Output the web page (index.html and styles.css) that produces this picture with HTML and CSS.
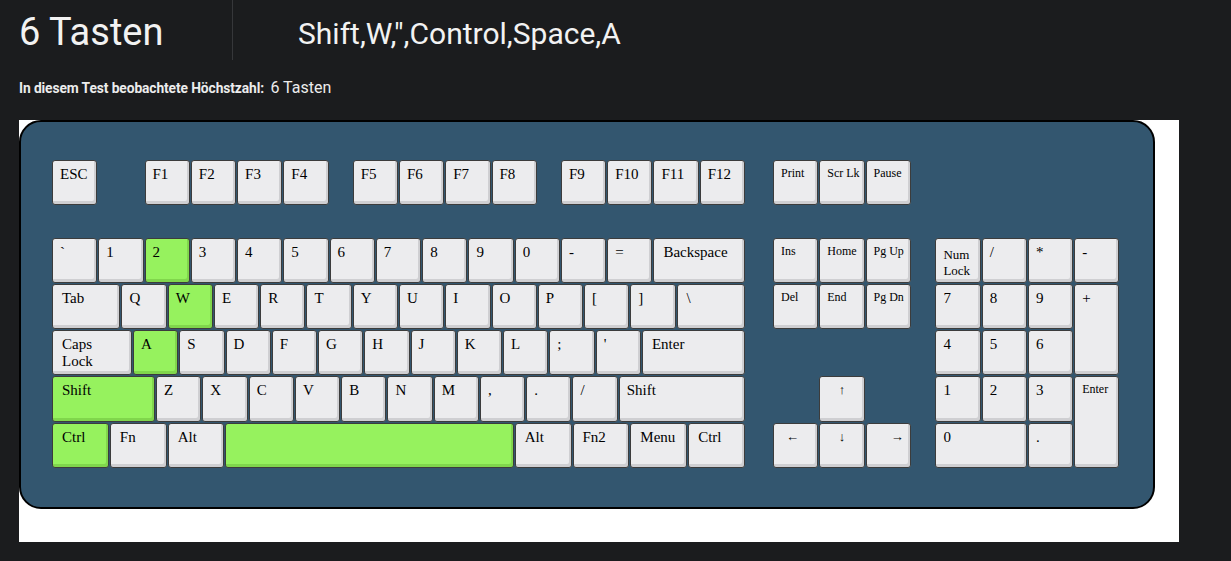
FILE: index.html
```html
<!DOCTYPE html>
<html lang="de">
<head>
    <meta charset="UTF-8">
    <meta name="viewport" content="width=device-width, initial-scale=1.0">
    <title>Tastatur Test</title>
    <link rel="stylesheet" href="styles.css">
</head>
<body>
    <div class="header">
        <div class="count">6 Tasten</div>
        <div class="pressed">Shift,W,",Control,Space,A</div>
    </div>
    <div class="stat"><b>In diesem Test beobachtete Höchstzahl:</b> <span>6 Tasten</span></div>

    <div class="board">
        <div class="keyboard">
            <!-- Haupttastenfeld -->
            <div class="section main">
                <div class="row frow">
                    <div class="key">ESC</div>
                    <div class="gap1"></div>
                    <div class="key">F1</div>
                    <div class="key">F2</div>
                    <div class="key">F3</div>
                    <div class="key">F4</div>
                    <div class="gap05"></div>
                    <div class="key">F5</div>
                    <div class="key">F6</div>
                    <div class="key">F7</div>
                    <div class="key">F8</div>
                    <div class="gap05"></div>
                    <div class="key">F9</div>
                    <div class="key">F10</div>
                    <div class="key">F11</div>
                    <div class="key">F12</div>
                </div>
                <div class="row">
                    <div class="key">`</div>
                    <div class="key">1</div>
                    <div class="key on">2</div>
                    <div class="key">3</div>
                    <div class="key">4</div>
                    <div class="key">5</div>
                    <div class="key">6</div>
                    <div class="key">7</div>
                    <div class="key">8</div>
                    <div class="key">9</div>
                    <div class="key">0</div>
                    <div class="key">-</div>
                    <div class="key">=</div>
                    <div class="key w2">Backspace</div>
                </div>
                <div class="row">
                    <div class="key w15">Tab</div>
                    <div class="key">Q</div>
                    <div class="key on">W</div>
                    <div class="key">E</div>
                    <div class="key">R</div>
                    <div class="key">T</div>
                    <div class="key">Y</div>
                    <div class="key">U</div>
                    <div class="key">I</div>
                    <div class="key">O</div>
                    <div class="key">P</div>
                    <div class="key">[</div>
                    <div class="key">]</div>
                    <div class="key w15">\</div>
                </div>
                <div class="row">
                    <div class="key w175">Caps<br>Lock</div>
                    <div class="key on">A</div>
                    <div class="key">S</div>
                    <div class="key">D</div>
                    <div class="key">F</div>
                    <div class="key">G</div>
                    <div class="key">H</div>
                    <div class="key">J</div>
                    <div class="key">K</div>
                    <div class="key">L</div>
                    <div class="key">;</div>
                    <div class="key">'</div>
                    <div class="key w225">Enter</div>
                </div>
                <div class="row">
                    <div class="key w225 on">Shift</div>
                    <div class="key">Z</div>
                    <div class="key">X</div>
                    <div class="key">C</div>
                    <div class="key">V</div>
                    <div class="key">B</div>
                    <div class="key">N</div>
                    <div class="key">M</div>
                    <div class="key">,</div>
                    <div class="key">.</div>
                    <div class="key">/</div>
                    <div class="key w275">Shift</div>
                </div>
                <div class="row">
                    <div class="key w125 on">Ctrl</div>
                    <div class="key w125">Fn</div>
                    <div class="key w125">Alt</div>
                    <div class="key w625 on"></div>
                    <div class="key w125">Alt</div>
                    <div class="key w125">Fn2</div>
                    <div class="key w125">Menu</div>
                    <div class="key w125">Ctrl</div>
                </div>
            </div>

            <!-- Steuerblock -->
            <div class="section nav">
                <div class="row frow">
                    <div class="key small">Print</div>
                    <div class="key small">Scr Lk</div>
                    <div class="key small">Pause</div>
                </div>
                <div class="row">
                    <div class="key small">Ins</div>
                    <div class="key small">Home</div>
                    <div class="key small">Pg Up</div>
                </div>
                <div class="row">
                    <div class="key small">Del</div>
                    <div class="key small">End</div>
                    <div class="key small">Pg Dn</div>
                </div>
                <div class="row"></div>
                <div class="row">
                    <div class="gap1"></div>
                    <div class="key arrow">↑</div>
                </div>
                <div class="row">
                    <div class="key arrow left">←</div>
                    <div class="key arrow">↓</div>
                    <div class="key arrow right">→</div>
                </div>
            </div>

            <!-- Ziffernblock -->
            <div class="section numpad">
                <div class="row frow"></div>
                <div class="pad">
                    <div class="key numlock">Num<br>Lock</div>
                    <div class="key">/</div>
                    <div class="key">*</div>
                    <div class="key">-</div>
                    <div class="key">7</div>
                    <div class="key">8</div>
                    <div class="key">9</div>
                    <div class="key tall">+</div>
                    <div class="key">4</div>
                    <div class="key">5</div>
                    <div class="key">6</div>
                    <div class="key">1</div>
                    <div class="key">2</div>
                    <div class="key">3</div>
                    <div class="key tall small">Enter</div>
                    <div class="key wide">0</div>
                    <div class="key">.</div>
                </div>
            </div>
        </div>
    </div>
</body>
</html>
```

FILE: styles.css
```css
:root{
    /* Breite einer Standardtaste inkl. Abstand */
    --u: 46.27px;
}
body{
    margin: 0;
    background-color: #1b1c1e;
    color: #f2f2f2;
    font-family: Roboto, "Noto Sans", sans-serif;
}
.header{
    display: flex;
    height: 60px;
}
.count{
    box-sizing: border-box;
    width: 233px;
    padding: 10px 0 0 19px;
    border-right: 1px solid #36373a;
    font-size: 38px;
    line-height: 44px;
}
.pressed{
    padding: 17px 0 0 65px;
    font-size: 30px;
    line-height: 34px;
}
.stat{
    margin: 18px 0 0 19px;
    height: 20px;
    line-height: 20px;
    font-size: 13.8px;
    color: #ececec;
}
.stat b{
    font-weight: 700;
    letter-spacing: -0.1px;
}
.stat span{
    margin-left: 3px;
    font-size: 16px;
}
.board{
    width: 1160px;
    height: 422px;
    margin: 22px 0 0 19px;
    background-color: #fff;
}
.keyboard{
    box-sizing: border-box;
    width: 1136px;
    height: 389px;
    padding: 37.5px 0 0 30.5px;
    border: 2px solid #000;
    border-radius: 22px;
    background-color: #33566f;
    display: flex;
    align-items: flex-start;
}
.section{
    display: flex;
    flex-direction: column;
}
.nav{
    margin-left: 27px;
}
.numpad{
    margin-left: 23.6px;
}
.row{
    display: flex;
    height: var(--u);
}
.frow{
    margin-bottom: 31.4px;
}
.gap1{
    flex: none;
    width: var(--u);
}
.gap05{
    flex: none;
    width: calc(var(--u) / 2);
}
.key{
    flex: none;
    box-sizing: border-box;
    width: calc(var(--u) - 1px);
    height: calc(var(--u) - 1px);
    margin: 0.5px;
    padding: 5px 0 0 7px;
    background-color: #ececee;
    border: 1px solid #3c3c3c;
    border-radius: 3px;
    box-shadow: inset -2px -3px 0 #cfcfd2;
    color: #000;
    font-family: "Liberation Serif", "Times New Roman", serif;
    font-size: 15px;
    line-height: 17px;
}
.key.on{
    background-color: #96f25e;
    box-shadow: inset -2px -3px 0 #80d64c;
}
.w125{ width: calc(var(--u) * 1.25 - 1px); padding-left: 9px; }
.w15{ width: calc(var(--u) * 1.5 - 1px); padding-left: 9px; }
.w175{ width: calc(var(--u) * 1.75 - 1px); padding-left: 9px; }
.w2{ width: calc(var(--u) * 2 - 1px); padding-left: 9px; }
.w225{ width: calc(var(--u) * 2.25 - 1px); padding-left: 9px; }
.w275{ width: calc(var(--u) * 2.75 - 1px); }
.w625{ width: calc(var(--u) * 6.25 - 1px); }

.small{
    font-size: 12px;
    line-height: 15px;
    padding-left: 7px;
}
.arrow{
    padding: 4px 0 0 0;
    text-align: center;
    font-size: 13px;
}
.arrow.left{
    text-align: left;
    padding-left: 12px;
}
.arrow.right{
    text-align: right;
    padding-right: 6px;
}
.pad{
    display: grid;
    grid-template-columns: repeat(4, var(--u));
    grid-template-rows: repeat(5, var(--u));
}
.pad .key{
    width: auto;
    height: auto;
}
.numlock{
    padding-top: 8px;
    font-size: 13px;
    line-height: 16px;
}
.tall{
    grid-column: 4;
    grid-row: span 2;
}
.wide{
    grid-column: span 2;
}
```
